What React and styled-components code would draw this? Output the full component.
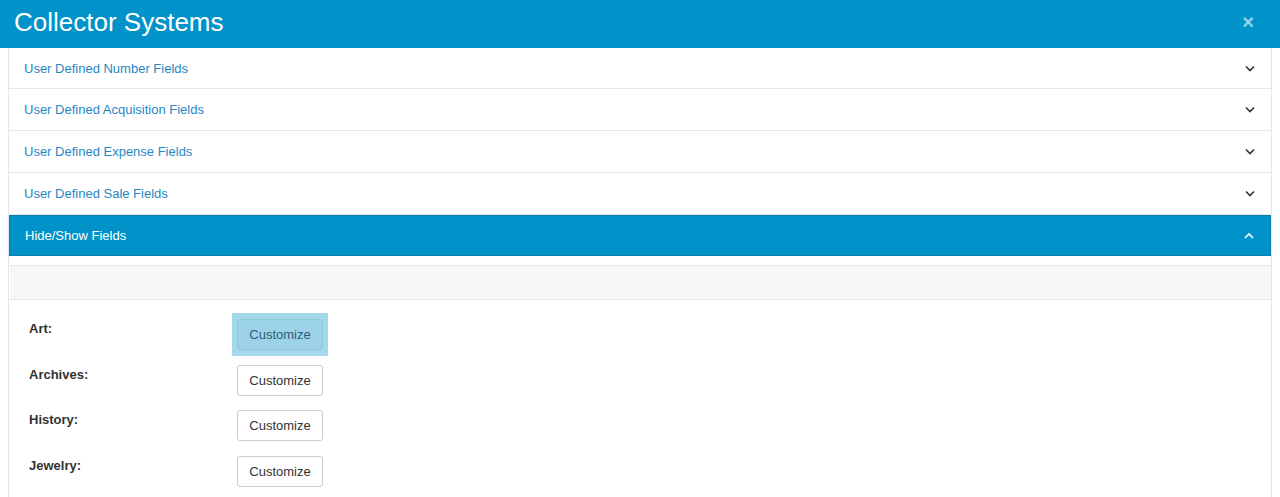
import React from "react";
import styled, { createGlobalStyle } from "styled-components";

const Global = createGlobalStyle`
  body {
    margin: 0;
    background: #fff;
    font-family: "Liberation Sans", Arial, sans-serif;
  }
`;

const Header = styled.header`
  height: 48px;
  background: #0092c8;
  display: flex;
  align-items: center;
  justify-content: space-between;
  padding: 0 26px 0 14px;
`;

const Title = styled.h1`
  margin: 0 0 4px;
  font-size: 26px;
  font-weight: normal;
  color: #fff;
`;

const Close = styled.span`
  color: rgba(255, 255, 255, 0.6);
  font-size: 20px;
  font-weight: bold;
  line-height: 1;
  margin-bottom: 4px;
`;

const Body = styled.div`
  margin: 0 8px 0 8px;
  border-left: 1px solid #e6e6e6;
  border-right: 1px solid #e6e6e6;
  min-height: 449px;
`;

const Row = styled.div`
  height: ${(p) => (p.first ? "40px" : "41px")};
  display: flex;
  align-items: center;
  justify-content: space-between;
  padding: 0 16px 0 15px;
  border-bottom: 1px solid #e8e8e8;
  font-size: 13px;
  color: #1f88c4;
  background: #fff;
`;

const OpenRow = styled(Row)`
  height: 39px;
  color: #fff;
  background: #0092c8;
  border: 1px solid #0a7fab;
`;

const Chevron = ({ up }) => (
  <svg width="10" height="7" viewBox="0 0 10 7">
    <path
      d={up ? "M1 6 L5 2 L9 6" : "M1 1.5 L5 5.5 L9 1.5"}
      fill="none"
      stroke="currentColor"
      strokeWidth="1.6"
    />
  </svg>
);

const Arrow = styled.span`
  color: ${(p) => (p.up ? "#fff" : "#333")};
  display: flex;
`;

const Well = styled.div`
  margin-top: 9px;
  margin-left: 1px;
  height: 33px;
  background: #f7f7f7;
  border-top: 1px solid #e6e6e6;
  border-bottom: 1px solid #e6e6e6;
`;

const Fields = styled.div`
  padding: 19px 0 0 20px;
  display: grid;
  grid-template-columns: 208px auto;
  row-gap: 14.5px;
  justify-content: start;
`;

const Label = styled.div`
  font-size: 13px;
  font-weight: bold;
  color: #333;
  padding-top: 2px;
`;

const Focus = styled.div`
  padding: 6px 5px;
  margin: -6px -5px;
  width: fit-content;
  background: ${(p) => (p.active ? "#a6d8ec" : "transparent")};
`;

const Button = styled.button`
  width: 86px;
  height: 31px;
  font-family: "Liberation Sans", Arial, sans-serif;
  font-size: 13px;
  border-radius: 3px;
  border: 1px solid ${(p) => (p.active ? "#8ec6dc" : "#ccc")};
  background: ${(p) => (p.active ? "#9dd3e8" : "#fff")};
  color: ${(p) => (p.active ? "#2b5f77" : "#333")};
  padding: 0;
`;

const sections = [
  "User Defined Number Fields",
  "User Defined Acquisition Fields",
  "User Defined Expense Fields",
  "User Defined Sale Fields",
];

const fields = ["Art:", "Archives:", "History:", "Jewelry:"];

export default function App() {
  return (
    <>
      <Global />
      <Header>
        <Title>Collector Systems</Title>
        <Close>×</Close>
      </Header>
      <Body>
        {sections.map((s, i) => (
          <Row key={s} first={i === 0}>
            {s}
            <Arrow>
              <Chevron />
            </Arrow>
          </Row>
        ))}
        <OpenRow>
          Hide/Show Fields
          <Arrow up>
            <Chevron up />
          </Arrow>
        </OpenRow>
        <Well />
        <Fields>
          {fields.map((f, i) => (
            <React.Fragment key={f}>
              <Label>{f}</Label>
              <div>
                <Focus active={i === 0}>
                  <Button active={i === 0}>Customize</Button>
                </Focus>
              </div>
            </React.Fragment>
          ))}
        </Fields>
      </Body>
    </>
  );
}
